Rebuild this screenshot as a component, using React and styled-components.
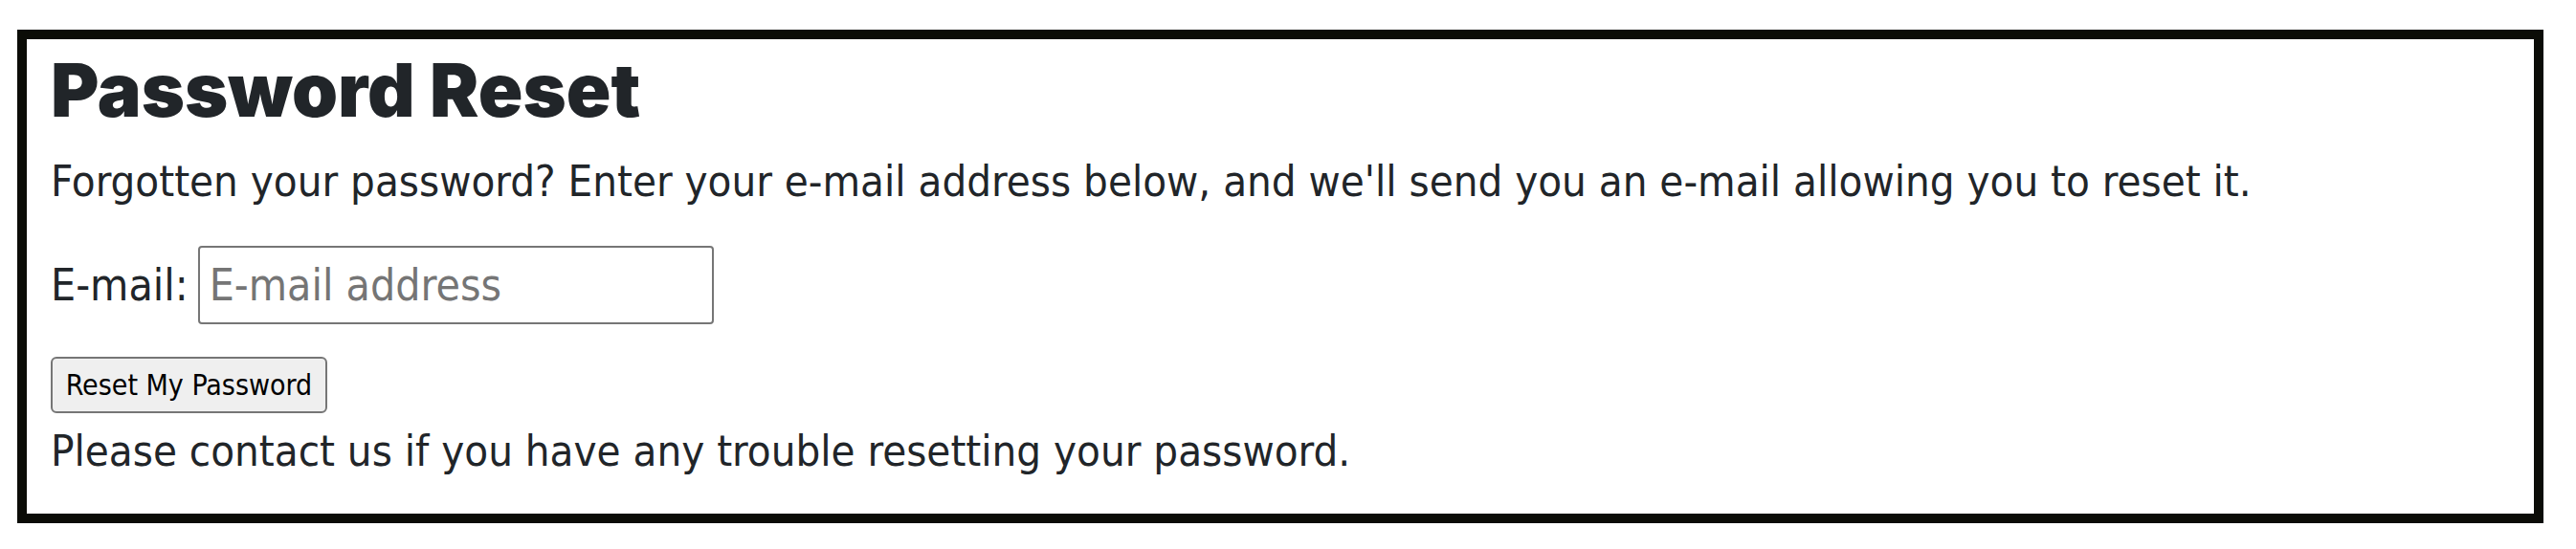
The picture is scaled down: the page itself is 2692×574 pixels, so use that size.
import React from 'react';
import styled, { createGlobalStyle } from 'styled-components';

const GlobalStyle = createGlobalStyle`
  body {
    margin: 0;
    background: #fff;
    color: #212529;
    font-family: "DejaVu Sans Condensed", "DejaVu Sans", sans-serif;
  }
`;

const Page = styled.div`
  padding: 31px 34px 0 18px;
`;

const Card = styled.main`
  border: 10px solid #0b0c07;
  padding: 8px 25px 37px;
  display: flex;
  flex-direction: column;
  align-items: flex-start;
`;

const Title = styled.h1`
  margin: 0 0 22px;
  font-family: "Inter", sans-serif;
  font-weight: 900;
  font-size: 77px;
  line-height: 91px;
`;

const Text = styled.p`
  margin: ${(p) => p.$top || 0}px 0 0;
  font-size: 45.2px;
  line-height: 56px;
`;

const Field = styled.div`
  margin-top: 39px;
  display: flex;
  align-items: baseline;
  gap: 10px;
  font-size: 46px;
`;

const Input = styled.input`
  box-sizing: border-box;
  width: 539px;
  height: 82px;
  padding: 0 10px;
  border: 2px solid #767676;
  border-radius: 4px;
  font: inherit;
  color: #212529;
  &::placeholder {
    color: #757575;
  }
`;

const Button = styled.button`
  margin-top: 34px;
  box-sizing: border-box;
  width: 289px;
  height: 59px;
  padding: 0 12px;
  background: #efefef;
  border: 2px solid #767676;
  border-radius: 6px;
  font-family: inherit;
  font-size: 30px;
  color: #000;
  white-space: nowrap;
`;

const App = () => (
  <>
    <GlobalStyle />
    <Page>
      <Card>
        <Title>Password Reset</Title>
        <Text>
          Forgotten your password? Enter your e-mail address below, and we'll send you an e-mail allowing you to reset it.
        </Text>
        <form>
          <Field>
            <label htmlFor="email">E-mail:</label>
            <Input id="email" type="email" placeholder="E-mail address" />
          </Field>
          <Button type="submit">Reset My Password</Button>
        </form>
        <Text $top={12}>Please contact us if you have any trouble resetting your password.</Text>
      </Card>
    </Page>
  </>
);

export default App;
